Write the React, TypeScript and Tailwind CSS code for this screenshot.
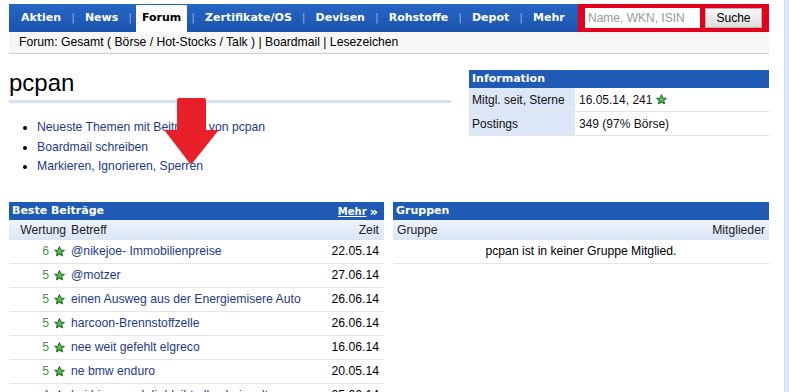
import React from "react";

const navItems = ["Aktien", "News", "Forum", "Zertifikate/OS", "Devisen", "Rohstoffe", "Depot", "Mehr"];

const posts = [
  { score: 6, title: "@nikejoe- Immobilienpreise", date: "22.05.14" },
  { score: 5, title: "@motzer", date: "27.06.14" },
  { score: 5, title: "einen Ausweg aus der Energiemisere Auto", date: "26.06.14" },
  { score: 5, title: "harcoon-Brennstoffzelle", date: "26.06.14" },
  { score: 5, title: "nee weit gefehlt elgreco", date: "16.06.14" },
  { score: 5, title: "ne bmw enduro", date: "20.05.14" },
  { score: 4, title: "bei biene und dir bleibt alles beim alten", date: "25.06.14" },
];

function Star() {
  return (
    <svg width="11" height="11" viewBox="0 0 24 24" className="shrink-0">
      <path
        d="M12 1.5l3.1 7 7.4.6-5.6 4.9 1.7 7.3L12 17.4l-6.6 3.9 1.7-7.3L1.5 9.1l7.4-.6z"
        fill="#5cb85c"
        stroke="#1f6e1f"
        strokeWidth="2.2"
        strokeLinejoin="round"
      />
    </svg>
  );
}

function BoxHeader({ title, more }: { title: string; more?: boolean }) {
  return (
    <div className="flex h-[18px] items-center justify-between bg-[#1f5ab4] px-[3px] font-['DejaVu_Sans',sans-serif] text-[11px] font-bold text-white">
      <span>{title}</span>
      {more && (
        <span className="flex items-center gap-[3px] pr-[3px]">
          <span className="text-[10px] underline">Mehr</span>
          <span className="text-[13px] leading-none">»</span>
        </span>
      )}
    </div>
  );
}

export default function App() {
  return (
    <div className="flex h-[392px] w-[789px] overflow-hidden bg-white font-['Liberation_Sans',Arial,sans-serif] text-[12px] text-[#111]">
      <div className="w-[784px] shrink-0 pl-[9px] pr-[15px] pt-[4px]">
        {/* Hauptnavigation */}
        <div className="flex h-[28px] items-stretch bg-gradient-to-b from-[#2766c4] to-[#1b53ad]">
          <div className="flex items-stretch pl-[6px] font-['DejaVu_Sans',sans-serif] text-[11px] font-bold">
            {navItems.map((item, i) => (
              <React.Fragment key={item}>
                {i > 0 && (
                  <span className="mx-[4px] flex items-center font-normal text-[#8fb0e2]">|</span>
                )}
                <span
                  className={`flex items-center px-[6px] ${
                    item === "Forum" ? "mt-[1px] bg-white text-black" : "text-white"
                  }`}
                >
                  {item}
                </span>
              </React.Fragment>
            ))}
          </div>
          <div className="ml-auto flex w-[191px] items-center gap-[5px] bg-[#e2001a] px-[7px]">
            <div className="flex h-[20px] w-[115px] items-center bg-white pl-[3px] text-[12px] text-[#999]">
              Name, WKN, ISIN
            </div>
            <div className="flex h-[20px] w-[57px] items-center justify-center border border-[#b5b5b5] bg-gradient-to-b from-[#f7f7f7] to-[#dddddd] text-[12px] text-black">
              Suche
            </div>
          </div>
        </div>

        {/* Unternavigation */}
        <div className="flex h-[22px] items-center border-b border-[#cfcfcf] bg-[#f6f6f6] pl-[10px] text-[12.2px] text-black">
          Forum: Gesamt ( Börse / Hot-Stocks / Talk ) | Boardmail | Lesezeichen
        </div>

        {/* Kopfbereich */}
        <div className="relative flex h-[148px]">
          <div className="w-[442px]">
            <div className="mt-[15px] border-b-[3px] border-[#d6e3f4] pb-[3px]">
              <h1 className="text-[24px] leading-[28px] text-black">pcpan</h1>
            </div>
            <ul className="mt-[15px] list-disc pl-[28px] text-[12.2px] leading-[19.7px] text-[#233a8c] marker:text-black">
              <li>Neueste Themen mit Beiträgen von pcpan</li>
              <li>Boardmail schreiben</li>
              <li>Markieren, Ignorieren, Sperren</li>
            </ul>
          </div>

          <div className="ml-[18px] mt-[16px] w-[300px]">
            <BoxHeader title="Information" />
            <div className="flex h-[24px] border-b border-[#e3e3e3]">
              <div className="flex w-[106px] items-center bg-[#dce7f7] pl-[3px]">Mitgl. seit, Sterne</div>
              <div className="flex items-center gap-[4px] pl-[4px]">
                16.05.14, 241 <Star />
              </div>
            </div>
            <div className="flex h-[24px] border-b border-[#e3e3e3]">
              <div className="flex w-[106px] items-center bg-[#dce7f7] pl-[3px]">Postings</div>
              <div className="flex items-center pl-[4px]">349 (97% Börse)</div>
            </div>
          </div>

          {/* Markierungspfeil */}
          <svg
            className="absolute left-[150px] top-[43px]"
            width="66"
            height="74"
            viewBox="0 0 66 74"
          >
            <path
              d="M18 3 Q18 1 20 1 L45 1 Q47 1 47 3 L47 33 L58 33 Q60 33 58.6 34.6 L33.5 66 Q32 67.5 30.5 66 L6.4 34.6 Q5 33 7 33 L18 33 Z"
              fill="#e8202a"
            />
          </svg>
        </div>

        {/* Tabellen */}
        <div className="flex gap-[9px]">
          <div className="w-[375px]">
            <BoxHeader title="Beste Beiträge" more />
            <div className="flex h-[20px] items-center bg-gradient-to-b from-[#eef3fc] to-[#d9e5f6] text-[12.2px] text-[#222]">
              <span className="w-[60px] pr-[3px] text-right">Wertung</span>
              <span className="pl-[2px]">Betreff</span>
              <span className="ml-auto pr-[5px]">Zeit</span>
            </div>
            {posts.map((p) => (
              <div key={p.title} className="flex h-[24px] items-center border-b border-[#e6e6e6] text-[12.2px]">
                <span className="flex w-[60px] items-center justify-end gap-[5px] pr-[4px] text-[#3f9a3f]">
                  {p.score}
                  <Star />
                </span>
                <span className="pl-[2px] text-[#233a8c]">{p.title}</span>
                <span className="ml-auto pr-[5px] text-black">{p.date}</span>
              </div>
            ))}
          </div>

          <div className="flex-1">
            <BoxHeader title="Gruppen" />
            <div className="flex h-[20px] items-center justify-between bg-gradient-to-b from-[#eef3fc] to-[#d9e5f6] px-[4px] text-[12.2px] text-[#222]">
              <span>Gruppe</span>
              <span>Mitglieder</span>
            </div>
            <div className="flex h-[24px] items-center justify-center border-b border-[#e6e6e6] text-[12.2px] text-black">
              pcpan ist in keiner Gruppe Mitglied.
            </div>
          </div>
        </div>
      </div>
      <div className="w-[5px] shrink-0 border-l border-[#c9d9ef] bg-gradient-to-r from-[#e7eef9] to-[#d3e1f4]" />
    </div>
  );
}
